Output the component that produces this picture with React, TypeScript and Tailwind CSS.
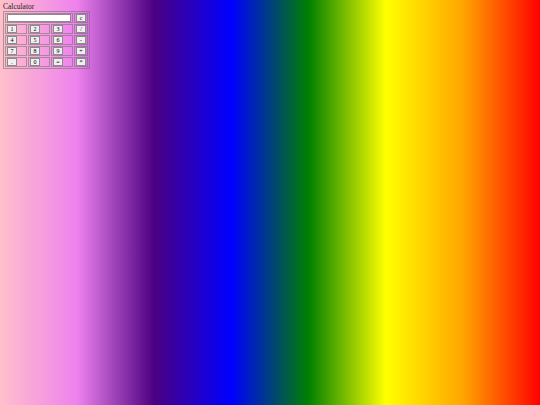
const keys = [
  ["1", "2", "3", "/"],
  ["4", "5", "6", "-"],
  ["7", "8", "9", "+"],
  [".", "0", "=", "*"],
];

const cell = "h-[10px] border border-[rgba(110,110,110,0.55)] px-[1px] py-0 align-middle";

function Key({ label }: { label: string }) {
  return (
    <button className="flex h-[8px] w-[10px] items-center justify-center border border-[#8a8a8a] bg-[#efefef] text-[6px] leading-none text-black">
      {label}
    </button>
  );
}

export default function App() {
  return (
    <div
      className="min-h-[405px] w-full bg-[linear-gradient(to_right,pink,violet,indigo,blue,green,yellow,orange,red)] px-[3px] pt-[3px]"
      style={{ fontFamily: '"Liberation Serif", serif' }}
    >
      <div className="text-[7.5px] leading-[8px] text-[#222]">Calculator</div>
      <table className="border-separate border-spacing-[1px] border border-[rgba(110,110,110,0.55)]">
        <tbody>
          <tr>
            <td colSpan={3} className={cell}>
              <div className="h-[8px] w-[64px] border border-[#8a8a8a] bg-white" />
            </td>
            <td className={`${cell} w-[12px]`}>
              <Key label="c" />
            </td>
          </tr>
          {keys.map((row, i) => (
            <tr key={i}>
              {row.map((k, j) => (
                <td key={j} className={`${cell} ${j < 3 ? "w-[21px]" : "w-[12px]"}`}>
                  <Key label={k} />
                </td>
              ))}
            </tr>
          ))}
        </tbody>
      </table>
    </div>
  );
}
